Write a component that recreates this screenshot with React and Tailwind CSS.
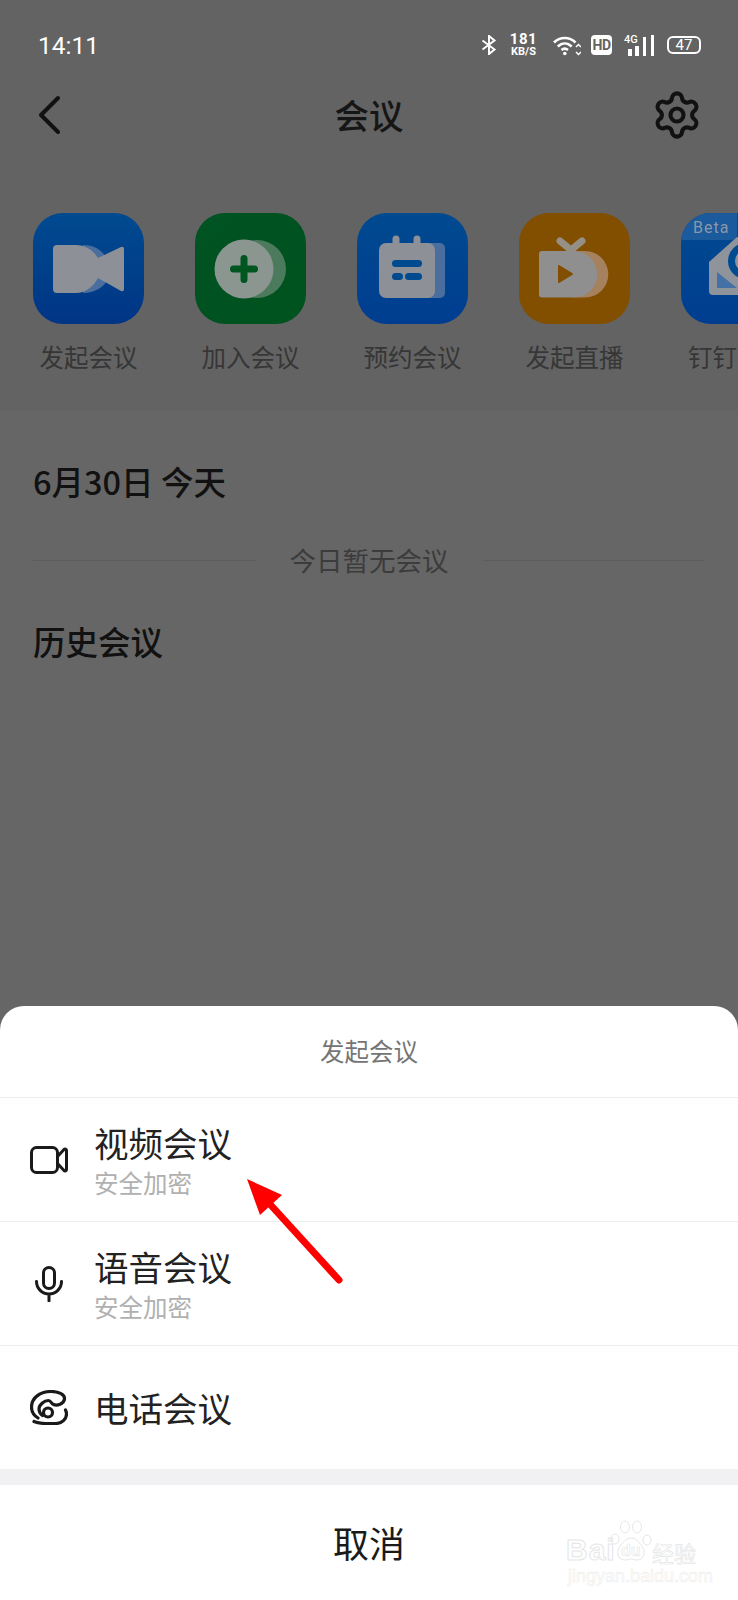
import { Fragment } from 'react'
import { Settings } from 'lucide-react'

const cjk = { fontFamily: '"Noto Sans CJK SC", "Noto Sans", sans-serif' }

function StatusBar() {
  return (
    <div className="h-[88px] flex items-center pl-[38px] pr-[37px] pt-[2px] text-white">
      <span className="text-[24.5px] mt-[2px] font-['Roboto'] font-normal">14:11</span>
      <div className="ml-auto flex items-center">
        <svg width="16" height="20" viewBox="0 0 16 20" fill="none" stroke="white" strokeWidth="2">
          <path d="M1.5 5.5 13.5 14.5 8 19V1l5.5 4.5L1.5 14.5" />
        </svg>
        <div className="ml-[13px] w-[27px] flex flex-col items-center font-['Roboto'] font-bold leading-none">
          <span className="text-[15px] leading-[14px] tracking-[0.5px]">181</span>
          <span className="text-[11px] leading-[12px]">KB/S</span>
        </div>
        <svg className="ml-[16px]" width="28" height="21" viewBox="0 0 28 21" fill="none" stroke="white" strokeWidth="2.6">
          <path d="M1 7.5C7 1.5 16.5 1.5 22.5 7.5" />
          <path d="M4.8 11.5C9 7.5 14.5 7.5 18.7 11.5" />
          <path d="M8.5 15C10.5 13.3 13 13.3 15 15" />
          <circle cx="11.8" cy="18.5" r="1.8" fill="white" stroke="none" />
          <path d="m23 12 2.5-2.5 2.5 2.5M23 17l2.5 2.5 2.5-2.5" strokeWidth="1.5" />
        </svg>
        <div className="ml-[10px] w-[21px] h-[20px] bg-white rounded-[4px] flex items-center justify-center font-['Roboto'] font-bold text-[14px] tracking-[-0.5px] text-[#636363] leading-none">
          HD
        </div>
        <div className="ml-[12px] relative w-[30px] h-[21px]">
          <span className="absolute left-0 -top-[1px] text-[11px] leading-[11px] font-['Roboto'] font-medium">4G</span>
          <svg className="absolute left-0 top-0" width="30" height="21" viewBox="0 0 30 21">
            <rect x="4" y="14" width="4" height="7" fill="white" />
            <rect x="11" y="11" width="4" height="10" fill="white" />
            <rect x="19" y="2" width="3" height="19" fill="white" />
            <rect x="27" y="0" width="3" height="21" fill="white" />
          </svg>
        </div>
        <div className="ml-[13px] w-[34px] h-[18px] rounded-[6px] border-2 border-white flex items-center justify-center font-['Roboto'] text-[15px] leading-none">
          47
        </div>
      </div>
    </div>
  )
}

function AppIcon({ bg, children }) {
  return (
    <div className={`w-[111px] h-[111px] rounded-[30px] shrink-0 overflow-hidden ${bg}`}>
      <svg width="111" height="111" viewBox="0 0 111 111">{children}</svg>
    </div>
  )
}

const apps = [
  {
    label: '发起会议',
    bg: 'bg-gradient-to-b from-[#004a90] to-[#003585]',
    art: (
      <Fragment>
        <path d="M50 32C62 32 70 38 74 46V68C70 74 62 80 50 80z" fill="#4a6f9f" />
        <path d="M24 32H43C52 32 60 37 65 45L88 34Q91 33 91 36V76Q91 79 88 78L65 65C60 74 52 80 43 80H24a4 4 0 0 1-4-4V36a4 4 0 0 1 4-4z" fill="#8d9096" />
      </Fragment>
    ),
  },
  {
    label: '加入会议',
    bg: 'bg-gradient-to-br from-[#005322] to-[#00521e]',
    art: (
      <Fragment>
        <circle cx="62" cy="56" r="29" fill="#4c7a5c" />
        <circle cx="49" cy="56" r="29.5" fill="#8c9691" />
        <path d="M49 45.5v21M38.5 56h21" stroke="#00561f" strokeWidth="7" strokeLinecap="round" />
      </Fragment>
    ),
  },
  {
    label: '预约会议',
    bg: 'bg-gradient-to-b from-[#004a90] to-[#003d90]',
    art: (
      <Fragment>
        <rect x="60" y="30" width="28" height="55" rx="5" fill="#4a6e9d" />
        <path d="M39 31v-5M60 31v-5" stroke="#8d9197" strokeWidth="7" strokeLinecap="round" />
        <rect x="22" y="30" width="56" height="55" rx="7" fill="#8d9197" />
        <rect x="35" y="47" width="30" height="7" rx="3.5" fill="#004a90" />
        <rect x="35" y="60" width="11" height="7" rx="3.5" fill="#004a90" />
        <rect x="48" y="60" width="17" height="7" rx="3.5" fill="#004a90" />
      </Fragment>
    ),
  },
  {
    label: '发起直播',
    bg: 'bg-[#824e00]',
    art: (
      <Fragment>
        <path d="M55 38h11a23.3 23.3 0 0 1 0 46.6H55z" fill="#a5825d" />
        <path d="M41 28l11 9 11-9" fill="none" stroke="#958f85" strokeWidth="7" strokeLinecap="round" strokeLinejoin="round" />
        <path d="M23 38H55a23.3 23.3 0 0 1 0 46.6H23a3 3 0 0 1-3-3V41a3 3 0 0 1 3-3z" fill="#8f8f8f" />
        <path d="M40 53l13 8-13 8z" fill="#824e00" stroke="#824e00" strokeWidth="2" strokeLinejoin="round" />
      </Fragment>
    ),
  },
  {
    label: '钉钉',
    bg: 'bg-gradient-to-b from-[#004a90] to-[#003d90]',
    art: (
      <Fragment>
        <path d="M0 0H56V22Q56 27 50 27H0z" fill="#1b5a9c" />
        <text x="12" y="20" fill="#8a97a8" fontSize="16" letterSpacing="1" fontFamily="Roboto">Beta</text>
        <path d="M28 49 56 24h60v58H32a4 4 0 0 1-4-4z" fill="#8f949c" />
        <path d="M36 59 56 75H36z" fill="#4470a5" />
        <circle cx="65" cy="48" r="14.5" fill="none" stroke="#004a90" strokeWidth="7" />
      </Fragment>
    ),
  },
]

function AppRow() {
  return (
    <div className="h-[266px] pt-[69px] pl-[33px] flex gap-[51px] overflow-hidden">
      {apps.map((a) => (
        <div key={a.label} className="w-[111px] shrink-0 flex flex-col items-center">
          <AppIcon bg={a.bg}>{a.art}</AppIcon>
          <span className={`mt-[16px] text-[24.5px] leading-[34px] text-[#363636] whitespace-nowrap ${a.label === '钉钉' ? 'self-start pl-[7px]' : ''}`}>
            {a.label}
          </span>
        </div>
      ))}
    </div>
  )
}

function VideoIcon() {
  return (
    <svg width="38" height="28" viewBox="0 0 38 28" fill="none" stroke="#1a1a1a" strokeWidth="3" strokeLinejoin="round">
      <rect x="1.5" y="1.5" width="26" height="25" rx="5" />
      <path d="M27.5 10.5 34 3.5c1-.8 2.5-.3 2.5 1v19c0 1.3-1.5 1.8-2.5 1L27.5 17.5" />
    </svg>
  )
}

function MicIcon() {
  return (
    <svg width="28" height="36" viewBox="0 0 28 36" fill="none" stroke="#1a1a1a" strokeWidth="3" strokeLinecap="round">
      <rect x="8.5" y="1.5" width="11" height="21" rx="5.5" />
      <path d="M1.5 15.5a12.5 12.5 0 0 0 25 0M14 28v7" />
    </svg>
  )
}

function PhoneIcon() {
  return (
    <svg width="38" height="35" viewBox="0 0 38 35" fill="none" stroke="#1a1a1a" strokeWidth="3.2" strokeLinecap="round" strokeLinejoin="round">
      <path d="M8 28C3 25 1.5 21 1.5 17 1.5 8 10 1.5 21 1.5c7 0 14 2.5 13.5 7.5-.5 5-7.5 7-11 5.5-2.5-1-2.500-4-5-4C14 10.5 9 15 9 19c0 3 1.5 5 3.5 6.5" />
      <circle cx="18" cy="22.5" r="4.5" />
      <path d="M4 31.5c4 2 8 2 12 2h10c6 0 10.5-4.5 10.5-9.5 0-2-.5-3-1-4" />
    </svg>
  )
}

const rows = [
  { title: '视频会议', sub: '安全加密', icon: <VideoIcon /> },
  { title: '语音会议', sub: '安全加密', icon: <MicIcon /> },
  { title: '电话会议', icon: <PhoneIcon /> },
]

function Sheet() {
  return (
    <div className="absolute left-0 right-0 bottom-0 h-[594px] bg-white rounded-t-[24px] flex flex-col">
      <div className="h-[91px] flex items-center justify-center text-[24.5px] text-[#757575]">发起会议</div>
      {rows.map((r) => (
        <div key={r.title} className="h-[124px] border-t border-[#ececec] first:border-[#e2e2e2] flex items-center pl-[29px]">
          <div className="w-[40px] shrink-0 flex justify-center">{r.icon}</div>
          <div className="ml-[25px] mb-[2px] flex flex-col gap-[4px]">
            <span className="text-[34.5px] leading-[44px] text-[#222]">{r.title}</span>
            {r.sub && <span className="text-[24.5px] leading-[30px] text-[#b0b0b0]">{r.sub}</span>}
          </div>
        </div>
      ))}
      <div className="h-[16px] bg-[#f1f1f3]" />
      <div className="flex-1 pb-[2px] flex items-center justify-center text-[36px] text-[#1a1a1a]">取消</div>
      {/* baidu jingyan watermark */}
      <div className="absolute left-[566px] top-[514px] w-[134px] h-[64px] text-white [-webkit-text-stroke:1px_#e6e6e6] font-['Liberation_Sans'] font-bold">
        <div className="absolute left-0 top-[14px] text-[30px] leading-[32px] tracking-[1px]">Bai</div>
        <svg className="absolute left-[44px] top-0" width="44" height="44" viewBox="0 0 44 44" fill="none" stroke="#e6e6e6" strokeWidth="1">
          <ellipse cx="5" cy="19" rx="4" ry="5" />
          <ellipse cx="15" cy="7" rx="4.5" ry="6" />
          <ellipse cx="27" cy="7" rx="4.5" ry="6" />
          <ellipse cx="37" cy="20" rx="4" ry="5" />
          <path d="M21 18c5 0 9 5 12 10 3 6 0 12-6 12-3 0-4-1-6-1s-3 1-6 1c-6 0-9-6-6-12 3-5 7-10 12-10z" />
        </svg>
        <div className="absolute left-[55px] top-[22px] text-[16px] leading-[18px] [-webkit-text-stroke:0.6px_#e6e6e6]">du</div>
        <div className="absolute left-[86px] top-[18px] text-[22px] leading-[28px] whitespace-nowrap font-normal [-webkit-text-stroke:0.7px_#e6e6e6]" style={cjk}>经验</div>
        <div className="absolute left-[2px] top-[46px] text-[18px] leading-[20px] font-normal whitespace-nowrap [-webkit-text-stroke:0.5px_#ebebeb]">jingyan.baidu.com</div>
      </div>
    </div>
  )
}

export default function App() {
  return (
    <div className="relative w-[738px] h-[1600px] overflow-hidden bg-[#666666]" style={cjk}>
      <div className="bg-[#636363]">
        <StatusBar />
        <div className="h-[56px] pb-[3px] relative flex items-center justify-center">
          <svg className="absolute left-[36px] top-[7px]" width="26" height="40" viewBox="0 0 26 40" fill="none" stroke="#111" strokeWidth="4" strokeLinecap="round" strokeLinejoin="round">
            <path d="M22 3 5 20l17 17" />
          </svg>
          <span className="text-[34.5px] leading-none font-medium text-[#161616]">会议</span>
          <Settings className="absolute left-[651px] top-[1px]" size={52} color="#111" strokeWidth={1.9} />
        </div>
        <AppRow />
      </div>
      <div className="px-[33px]">
        <div className="mt-[48px] text-[32.5px] leading-[46px] font-medium text-[#111]">6月30日 今天</div>
        <div className="mt-[37px] w-[672px] flex items-center">
          <div className="flex-1 h-px bg-[#5c5c5c]" />
          <span className="mx-[34px] text-[26.5px] leading-[38px] text-[#3c3c3c]">今日暂无会议</span>
          <div className="flex-1 h-px bg-[#5c5c5c]" />
        </div>
        <div className="mt-[39px] text-[32.5px] leading-[46px] font-medium text-[#111]">历史会议</div>
      </div>
      <Sheet />
      <svg className="absolute left-[240px] top-[1170px]" width="110" height="120" viewBox="240 1170 110 120">
        <path d="M247 1179 282 1195 260 1215z" fill="#f00" />
        <path d="M268 1202 339 1280" stroke="#f00" strokeWidth="7" strokeLinecap="round" />
      </svg>
    </div>
  )
}
